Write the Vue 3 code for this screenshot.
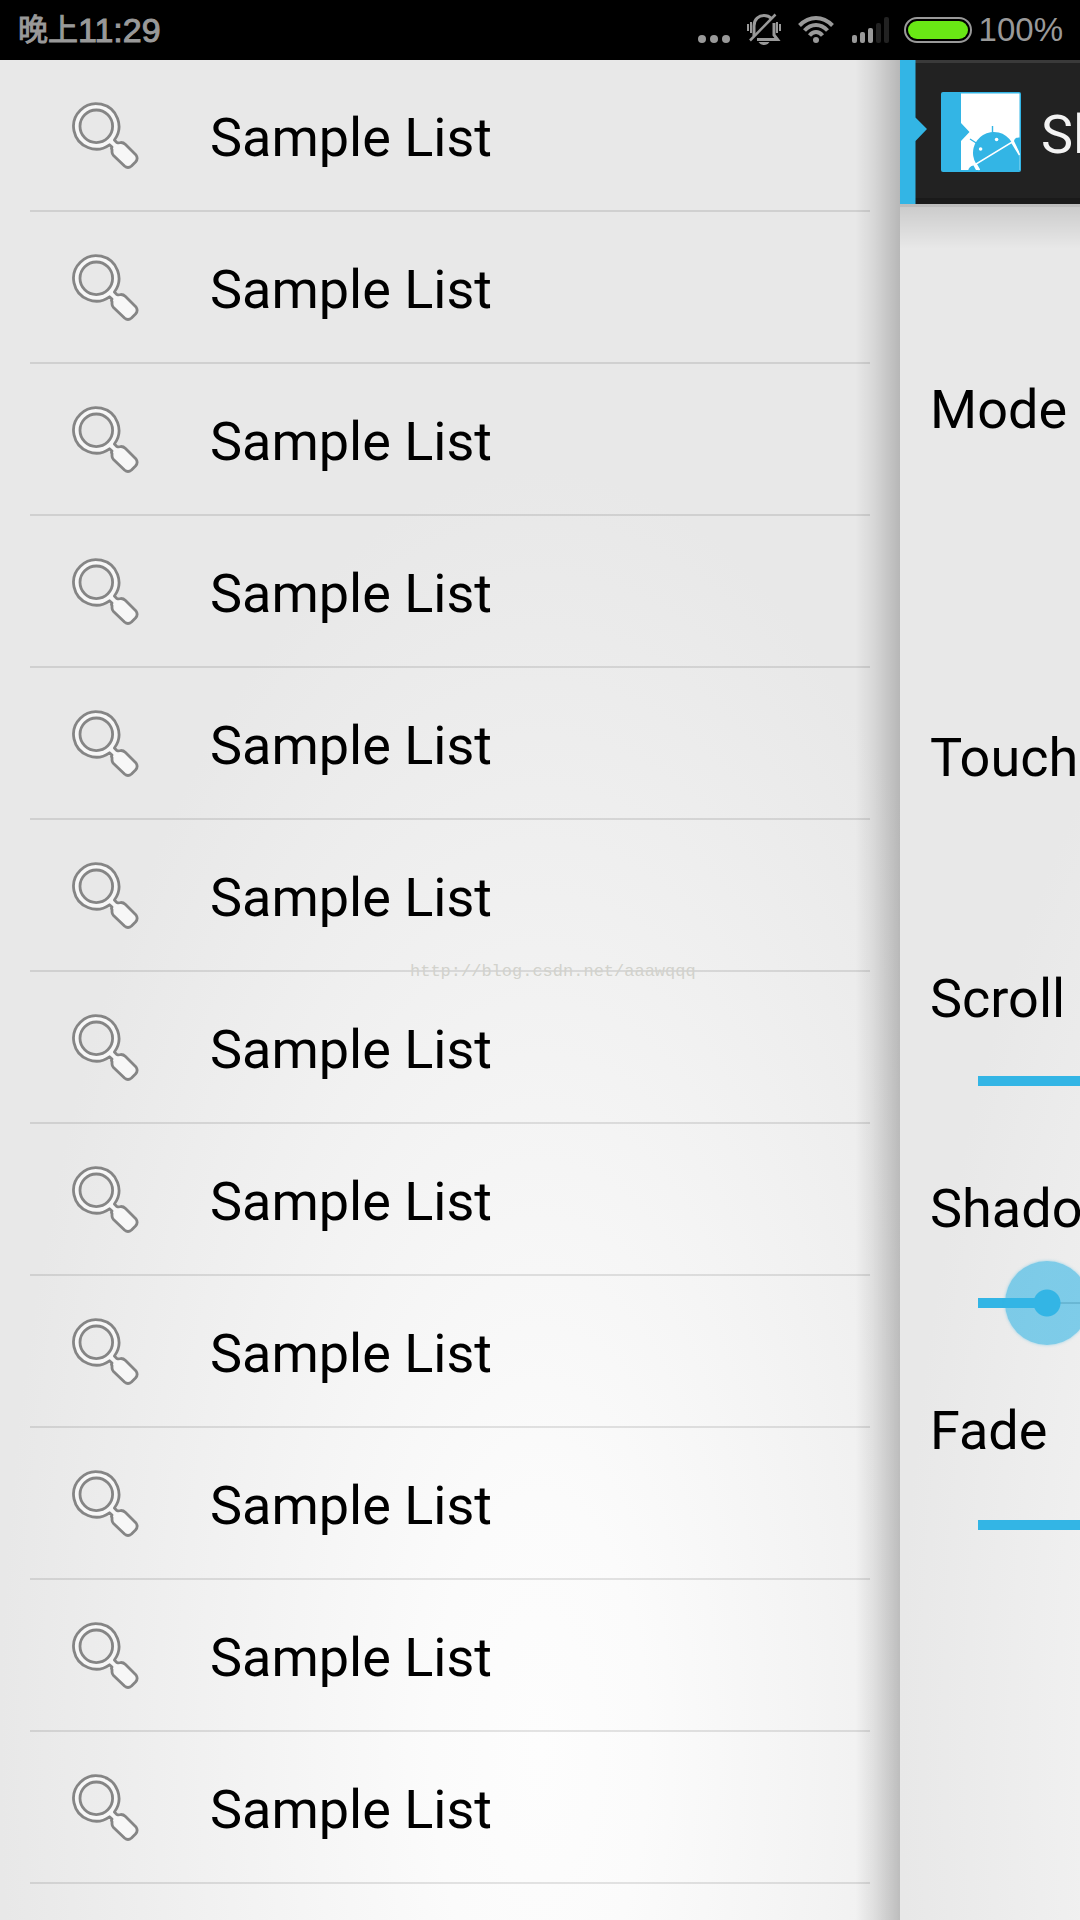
<script setup>
import { ref } from 'vue'

const rows = Array.from({ length: 12 }, (_, i) => ({ id: i, label: 'Sample List' }))
const scroll = ref(1000)
const shadow = ref(75)
const fade = ref(1000)
const fill = (v) => ({ '--fill': v / 1000 })
</script>

<template>
  <div class="screen">
    <header class="status">
      <div class="clock"><span class="period">晚上</span><span>11:29</span></div>
      <div class="indicators">
        <svg width="32" height="36" viewBox="0 0 32 36" fill="#999">
          <circle cx="4" cy="27" r="4" /><circle cx="16" cy="27" r="4" /><circle cx="28" cy="27" r="4" />
        </svg>
        <svg width="34" height="36" viewBox="0 0 34 36" fill="none" stroke="#999">
          <path d="M7 24V14C7 7 12 3.5 17 3.5c3 0 5.500 1 7.500 3M27 11v12l3.500 4.500H10" stroke-width="3" />
          <path d="M3 28.500L28.500 2.500" stroke-width="2.500" />
          <path d="M1 12v7M4 10v11M30 10v11M33 12v7" stroke-width="2" />
          <path d="M11.500 30h11q-2 3-5.500 3t-5.500-3z" fill="#999" stroke="none" />
        </svg>
        <svg width="36" height="36" viewBox="0 0 36 36" fill="none" stroke="#999" stroke-width="4">
          <path d="M1.500 13.500Q9 6 18 6t16.500 7.500M6.500 18.500Q11.500 13 18 13t11.500 5.500M11.500 23.500Q14.500 20 18 20t6.500 3.500" />
          <circle cx="18" cy="28" r="3" fill="#999" stroke="none" />
        </svg>
        <svg width="38" height="36" viewBox="0 0 38 36" fill="#999">
          <rect x="1" y="23" width="5" height="8" rx="2" />
          <rect x="9" y="20" width="5" height="11" rx="2" />
          <rect x="17" y="16" width="5" height="15" rx="2" />
          <rect x="25" y="11" width="5" height="20" rx="2" fill="#222" />
          <rect x="33" y="5" width="5" height="26" rx="2" fill="#222" />
        </svg>
        <svg class="battery" width="68" height="36" viewBox="0 0 68 36">
          <rect x="1" y="6" width="66" height="24" rx="12" fill="none" stroke="#999" stroke-width="2" />
          <rect x="4" y="9" width="60" height="18" rx="9" fill="#69e815" />
        </svg>
        <span class="percent">100%</span>
      </div>
    </header>

    <div class="panes">
      <nav class="menu">
        <ul>
          <li v-for="row in rows" :key="row.id">
            <svg width="70" height="70" viewBox="0 0 70 70">
              <path
                d="M44.400 40A22.700 22.700 0 1 0 39.500 44.800L42 47Q41 48.500 42 49.500L42 52Q42 54 43.500 55.500L54.500 66Q58 69 61.500 66L65.500 62Q68.500 58.500 66 55L55.500 44.500Q53.500 42.500 51 42.500Q48.500 43.300 46.800 42.500ZM10 26.300a16.300 16.300 0 1 0 32.600 0a16.300 16.300 0 1 0-32.600 0z"
                fill="#f7f7f7" fill-rule="evenodd" stroke="#858585" stroke-width="2.800" stroke-linejoin="round"
              />
            </svg>
            <span>{{ row.label }}</span>
          </li>
        </ul>
      </nav>

      <main class="above">
        <div class="page">
          <div class="actionbar">
            <svg class="handle" width="27" height="144" viewBox="0 0 27 144" fill="#33b5e5">
              <path d="M0 0h15.500v57.500l11.500 11.500-11.500 12V144H0z" />
            </svg>
            <svg class="logo" width="80" height="80" viewBox="0 0 80 80">
              <rect width="80" height="80" rx="2" fill="#33b5e5" />
              <path d="M20 1.500h58.500v76.500H20V49l8.500-9L20 31z" fill="#fff" />
              <g fill="#33b5e5">
                <path d="M35 71.500A20.700 20.700 0 0 1 70.500 50L78.500 63V79H38.500z" />
                <path d="M73 49q1-4 6-3.500v16zM27 79q1-5 5.500-5.500l3 5.500z" />
                <path d="M51.500 34v8M29 47l7 4.500" stroke="#33b5e5" stroke-width="1.400" />
              </g>
              <path d="M38.500 78L35 72L70.700 50.300L78.500 63" fill="none" stroke="#fff" stroke-width="1.500" />
              <circle cx="55.600" cy="47.500" r="1.800" fill="#fff" />
              <circle cx="39.600" cy="57" r="1.800" fill="#fff" />
            </svg>
            <h1>Sl</h1>
          </div>
          <section class="mode"><h2>Mode</h2></section>
          <section class="touch"><h2>Touch</h2></section>
          <section class="seek compact">
            <label for="scroll">Scroll</label>
            <input id="scroll" v-model="scroll" type="range" min="0" max="1000" :style="fill(scroll)" />
          </section>
          <section class="seek">
            <label for="shadow">Shado</label>
            <input id="shadow" v-model="shadow" type="range" min="0" max="1000" :style="fill(shadow)" />
          </section>
          <section class="seek">
            <label for="fade">Fade</label>
            <input id="fade" v-model="fade" type="range" min="0" max="1000" :style="fill(fade)" />
          </section>
        </div>
      </main>
    </div>
    <span class="watermark">http://blog.csdn.net/aaawqqq</span>
  </div>
</template>

<style>
body {
  margin: 0;
  background: #e8e8e8;
}
</style>

<style scoped>
.screen {
  position: relative;
  display: flex;
  flex-direction: column;
  min-height: 100vh;
  overflow: hidden;
  font-family: Roboto, sans-serif;
  font-size: 54px;
  color: #000;
}
.status {
  display: flex;
  justify-content: space-between;
  align-items: center;
  height: 60px;
  padding: 0 17px 0 18px;
  box-sizing: border-box;
  background: #000;
  color: #999;
  font-family: "Liberation Sans", "Noto Sans CJK SC", sans-serif;
  font-size: 34px;
  line-height: 60px;
}
.clock {
  display: flex;
  -webkit-text-stroke: 1px #999;
}
.period {
  font-size: 30px;
}
.indicators {
  display: flex;
  align-items: center;
  gap: 17px;
}
.indicators svg {
  flex: none;
}
.battery {
  margin-left: -2px;
}
.percent {
  margin-left: -10px;
  font-size: 33px;
}
.panes {
  display: flex;
  flex: 1;
}
.menu,
.page {
  background: radial-gradient(540px 1280px at 540px 1690px, #fdfdfd, #fbfbfb 20%, #f4f4f4 50%, #e8e8e8);
}
.menu {
  position: relative;
  flex: 1;
}
.menu::after {
  content: "";
  position: absolute;
  top: 0;
  right: 0;
  bottom: 0;
  width: 45px;
  background: linear-gradient(to right, rgba(0, 0, 0, 0), rgba(0, 0, 0, 0.07) 40%, rgba(0, 0, 0, 0.21));
}
ul {
  list-style: none;
  margin: 0;
  padding: 0 30px;
}
li {
  display: flex;
  align-items: center;
  gap: 70px;
  height: 152px;
  padding-left: 40px;
  box-sizing: border-box;
  border-bottom: 2px solid rgba(0, 0, 0, 0.1);
}
li span {
  padding-top: 4px;
}
.above {
  width: 180px;
  overflow: hidden;
}
.page {
  width: 100vw;
  min-height: 100%;
}
.actionbar {
  position: relative;
  display: flex;
  align-items: center;
  height: 144px;
  background: linear-gradient(#3a3a3a 3px, #222 3px, #222 138px, #1a1a1a 138px);
  color: #f3f3f3;
}
.actionbar::after {
  content: "";
  position: absolute;
  top: 100%;
  left: 0;
  right: 0;
  height: 45px;
  background: linear-gradient(rgba(0, 0, 0, 0.19) 3px, rgba(0, 0, 0, 0.12) 3px, rgba(0, 0, 0, 0));
}
.logo {
  margin-left: 14px;
}
h1,
h2 {
  margin: 0;
  font-size: 54px;
  font-weight: 400;
  line-height: 64px;
}
h1 {
  margin-left: 20px;
  padding-top: 6px;
}
.mode,
.touch,
.seek {
  padding-left: 30px;
}
.mode {
  padding-top: 174px;
  padding-bottom: 110px;
}
.touch {
  padding-top: 174px;
  padding-bottom: 177px;
}
.seek {
  height: 222px;
}
.seek.compact {
  height: 210px;
}
.seek label {
  display: block;
  line-height: 64px;
}
input[type="range"] {
  -webkit-appearance: none;
  appearance: none;
  display: block;
  width: calc(100vw - 72px);
  height: 84px;
  margin: 20px 0 0 6px;
  background:
    linear-gradient(#33b5e5, #33b5e5) 42px 50% / calc((100% - 84px) * var(--fill)) 10px no-repeat,
    linear-gradient(#bbb, #bbb) 42px 50% / calc(100% - 84px) 2px no-repeat;
}
.compact input[type="range"] {
  margin-top: 8px;
}
input[type="range"]::-webkit-slider-thumb {
  -webkit-appearance: none;
  width: 84px;
  height: 84px;
  border-radius: 50%;
  background: radial-gradient(circle, #33b5e5 13px, rgba(51, 181, 229, 0.6) 14px);
  box-shadow: 0 0 3px rgba(51, 181, 229, 0.5);
}
.watermark {
  position: absolute;
  top: 961px;
  left: 410px;
  font-family: "Liberation Mono", monospace;
  font-size: 17px;
  line-height: 22px;
  color: #d2d2cc;
}
</style>
